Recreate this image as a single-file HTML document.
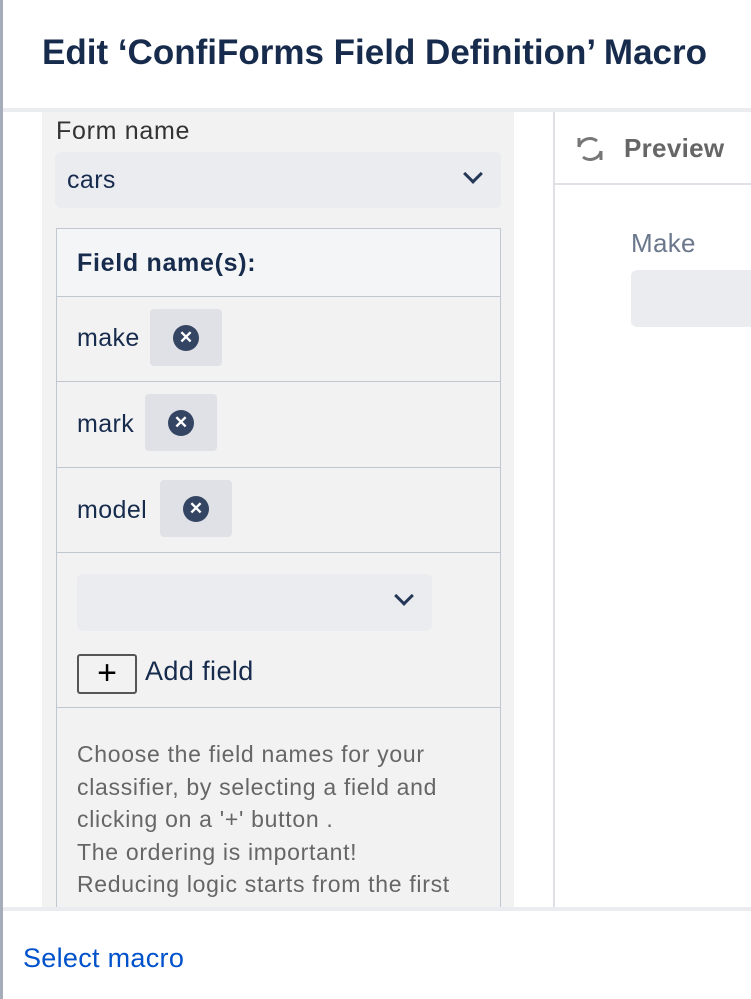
<!DOCTYPE html>
<html><head><style>
*{margin:0;padding:0;box-sizing:border-box}
body{width:751px;height:999px;overflow:hidden;background:#fff;font-family:"Liberation Sans",sans-serif;position:relative}
.a{position:absolute}
.chev{position:absolute;width:14px;height:14px;border-right:3.5px solid #253858;border-bottom:3.5px solid #253858;transform:rotate(45deg)}
.row{position:absolute;left:56px;width:445px;border:1px solid #c1c7d0;border-top:none;background:#f2f2f2}
.lbl{position:absolute;left:20px;font-size:25px;letter-spacing:0.4px;color:#172B4D}
.chip{position:absolute;top:12px;width:72px;height:57px;background:#dfe1e6;border-radius:4px}
.x{position:absolute;left:23px;top:16px;width:26px;height:26px;border-radius:50%;background:#344563;color:#fff;font-size:17px;font-weight:bold;text-align:center;line-height:26px}
</style></head><body>
<div class="a" style="left:0;top:0;width:3px;height:999px;background:#a5adba"></div>
<div class="a" style="left:42px;top:33px;font-size:35px;font-weight:bold;color:#172B4D;letter-spacing:0px">Edit ‘ConfiForms Field Definition’ Macro</div>
<div class="a" style="left:3px;top:108px;width:748px;height:4px;background:#ebecf0"></div>
<div class="a" style="left:42px;top:112px;width:472px;height:796px;background:#f2f2f2"></div>
<div class="a" style="left:56px;top:117px;font-size:25px;letter-spacing:0.7px;color:#333">Form name</div>
<div class="a" style="left:55px;top:152px;width:446px;height:56px;background:#ebecf0;border-radius:6px"><span class="a" style="left:12px;top:14px;font-size:25px;letter-spacing:0.4px;color:#172B4D">cars</span><div class="chev" style="left:411px;top:15px"></div></div>
<div class="a" style="left:56px;top:228px;width:445px;height:69px;border:1px solid #c1c7d0;background:#f4f5f7"><span class="lbl" style="top:20px;font-weight:bold;letter-spacing:0.7px">Field name(s):</span></div>
<div class="row" style="top:297px;height:85px"><span class="lbl" style="top:27px">make</span><div class="chip" style="left:93px"><div class="x">✕</div></div></div>
<div class="row" style="top:382px;height:86px"><span class="lbl" style="top:28px">mark</span><div class="chip" style="left:88px"><div class="x">✕</div></div></div>
<div class="row" style="top:468px;height:85px"><span class="lbl" style="top:28px">model</span><div class="chip" style="left:103px"><div class="x">✕</div></div></div>
<div class="row" style="top:553px;height:155px">
<div class="a" style="left:20px;top:21px;width:355px;height:57px;background:#ebecf0;border-radius:6px"><div class="chev" style="left:320px;top:15px"></div></div>
<div class="a" style="left:20px;top:101px;width:60px;height:40px;border:2px solid #555;border-radius:3px;font-size:34px;line-height:34px;text-align:center;color:#000">+</div>
<span class="lbl" style="left:88px;top:103px;font-size:27px">Add field</span>
</div>
<div class="row" style="top:708px;height:200px;border-bottom:none"><div class="a" style="left:20px;top:30px;font-size:23px;letter-spacing:0.7px;line-height:32.5px;color:#666;width:425px">Choose the field names for your classifier, by selecting a field and clicking on a '+' button .<br>The ordering is important!<br>Reducing logic starts from the first</div></div>
<div class="a" style="left:553px;top:112px;width:2px;height:796px;background:#dfe1e6"></div>
<svg class="a" style="left:574px;top:133px" width="32" height="32" viewBox="0 0 32 32" fill="none" stroke="#777" stroke-width="3"><path d="M5 14a11 10 0 0 1 18-6"/><path d="M5 5v9"/><path d="M27 18a11 10 0 0 1-18 6"/><path d="M27 27v-9"/></svg>
<div class="a" style="left:624px;top:133px;font-size:26px;letter-spacing:0.3px;font-weight:bold;color:#666">Preview</div>
<div class="a" style="left:555px;top:183px;width:196px;height:2px;background:#dfe1e6"></div>
<div class="a" style="left:631px;top:228px;font-size:26px;letter-spacing:0.3px;color:#6b778c">Make</div>
<div class="a" style="left:631px;top:270px;width:130px;height:57px;background:#ebecf0;border-radius:6px"></div>
<div class="a" style="left:3px;top:907px;width:748px;height:4px;background:#ebecf0"></div>
<div class="a" style="left:23px;top:943px;font-size:27px;letter-spacing:0.3px;color:#0052CC">Select macro</div>
</body></html>
